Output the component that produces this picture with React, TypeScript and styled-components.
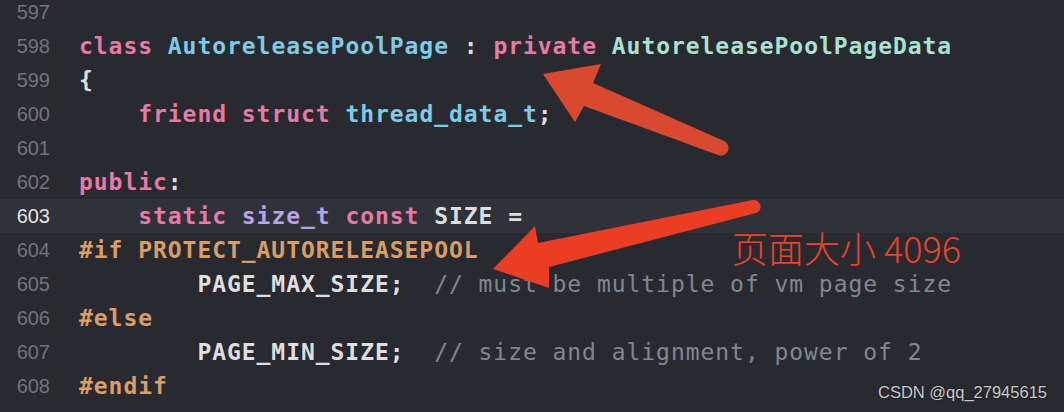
import * as React from 'react'
import styled, { createGlobalStyle } from 'styled-components'

type Kind = 'kw' | 'type' | 'super' | 'builtin' | 'pre' | 'plain' | 'comment'

const palette: Record<Kind, string> = {
  kw: '#e67aa7',
  type: '#7dcbe7',
  super: '#a9e1d4',
  builtin: '#b8a4e6',
  pre: '#d99d65',
  plain: '#dedede',
  comment: '#7e8893',
}

const GlobalStyle = createGlobalStyle`
  html, body {
    margin: 0;
    padding: 0;
    background: #292a30;
    overflow: hidden;
  }
`

const Screen = styled.div`
  position: relative;
  width: 1064px;
  height: 412px;
  overflow: hidden;
  background: #292a30;
`

const Editor = styled.div`
  display: flex;
  flex-direction: column;
  margin-top: -5px;
`

const Line = styled.div<{ $current?: boolean }>`
  display: flex;
  align-items: center;
  height: 34px;
  background: ${p => (p.$current ? '#2f3238' : 'transparent')};
`

const LineNo = styled.span<{ $current?: boolean }>`
  width: 50px;
  flex: none;
  text-align: right;
  font-family: 'Liberation Sans', Arial, sans-serif;
  font-size: 20px;
  color: ${p => (p.$current ? '#e2e2e2' : '#737378')};
`

const Code = styled.span`
  padding-left: 29px;
  white-space: pre;
  font-family: 'DejaVu Sans Mono', monospace;
  font-size: 23px;
  letter-spacing: 0.95px;
`

const Token = styled.span<{ $kind: Kind }>`
  color: ${p => palette[p.$kind]};
  font-weight: ${p => (p.$kind === 'comment' ? 400 : 700)};
`

const Arrows = styled.svg`
  position: absolute;
  left: 0;
  top: 0;
  pointer-events: none;
`

const Note = styled.div`
  position: absolute;
  left: 732px;
  top: 229px;
  font-family: 'Noto Sans CJK SC', 'Noto Sans', sans-serif;
  font-size: 36px;
  font-weight: 300;
  line-height: 1;
  color: #e9432a;
  white-space: nowrap;
`

const Watermark = styled.div`
  position: absolute;
  right: 17px;
  top: 384px;
  font-family: 'Liberation Sans', Arial, sans-serif;
  font-size: 16.5px;
  line-height: 1;
  color: #c9c9c9;
  text-shadow: 0 0 2px rgba(0, 0, 0, 0.6);
  white-space: nowrap;
`

type Tok = [Kind, string]

const lines: { no: number; current?: boolean; toks: Tok[] }[] = [
  { no: 597, toks: [] },
  {
    no: 598,
    toks: [
      ['kw', 'class'],
      ['plain', ' '],
      ['type', 'AutoreleasePoolPage'],
      ['plain', ' : '],
      ['kw', 'private'],
      ['plain', ' '],
      ['super', 'AutoreleasePoolPageData'],
    ],
  },
  { no: 599, toks: [['plain', '{']] },
  {
    no: 600,
    toks: [
      ['plain', '    '],
      ['kw', 'friend'],
      ['plain', ' '],
      ['kw', 'struct'],
      ['plain', ' '],
      ['type', 'thread_data_t'],
      ['plain', ';'],
    ],
  },
  { no: 601, toks: [] },
  { no: 602, toks: [['kw', 'public'], ['plain', ':']] },
  {
    no: 603,
    current: true,
    toks: [
      ['plain', '    '],
      ['kw', 'static'],
      ['plain', ' '],
      ['builtin', 'size_t'],
      ['plain', ' '],
      ['kw', 'const'],
      ['plain', ' SIZE ='],
    ],
  },
  { no: 604, toks: [['pre', '#if PROTECT_AUTORELEASEPOOL']] },
  {
    no: 605,
    toks: [
      ['plain', '        PAGE_MAX_SIZE;  '],
      ['comment', '// must be multiple of vm page size'],
    ],
  },
  { no: 606, toks: [['pre', '#else']] },
  {
    no: 607,
    toks: [
      ['plain', '        PAGE_MIN_SIZE;  '],
      ['comment', '// size and alignment, power of 2'],
    ],
  },
  { no: 608, toks: [['pre', '#endif']] },
  { no: 609, toks: [] },
]

export default function App() {
  return (
    <Screen>
      <GlobalStyle />
      <Editor>
        {lines.map(l => (
          <Line key={l.no} $current={l.current}>
            <LineNo $current={l.current}>{l.no}</LineNo>
            <Code>
              {l.toks.map((t, i) => (
                <Token key={i} $kind={t[0]}>
                  {t[1]}
                </Token>
              ))}
            </Code>
          </Line>
        ))}
      </Editor>

      <Arrows width="1064" height="412" viewBox="0 0 1064 412">
        <path
          d="M543 74 L601 64 L593 83 L724 141 A7.6 7.6 0 0 1 718 155 L584 106 L575 122 Z"
          fill="#d9492f"
        />
        <path
          d="M493 269 L535 226 L538 243 L753 200 A6.7 6.7 0 0 1 756 213 L549 267 L549 288 Z"
          fill="#ea3d24"
        />
      </Arrows>

      <Note>页面大小 4096</Note>
      <Watermark>CSDN @qq_27945615</Watermark>
    </Screen>
  )
}
